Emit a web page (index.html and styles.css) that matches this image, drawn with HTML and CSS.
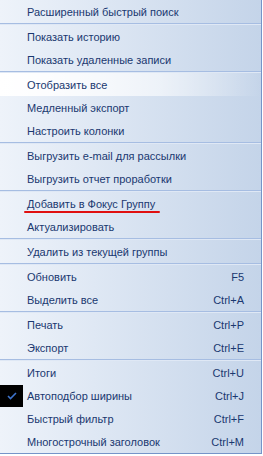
FILE: index.html
```html
<!DOCTYPE html>
<html lang="ru">
<head>
    <meta charset="UTF-8">
    <title>Контекстное меню</title>
    <link rel="stylesheet" href="styles.css">
</head>
<body>

    <!-- Context menu -->
    <div class="menu">
        <div class="item"><span class="icon"></span><span class="label">Расширенный быстрый поиск</span></div>
        <div class="sep"></div>
        <div class="item"><span class="icon"></span><span class="label">Показать историю</span></div>
        <div class="item"><span class="icon"></span><span class="label">Показать удаленные записи</span></div>
        <div class="sep"></div>
        <div class="item hover"><span class="icon"></span><span class="label">Отобразить все</span></div>
        <div class="item"><span class="icon"></span><span class="label">Медленный экспорт</span></div>
        <div class="item"><span class="icon"></span><span class="label">Настроить колонки</span></div>
        <div class="sep"></div>
        <div class="item"><span class="icon"></span><span class="label">Выгрузить e-mail для рассылки</span></div>
        <div class="item"><span class="icon"></span><span class="label">Выгрузить отчет проработки</span></div>
        <div class="sep"></div>
        <div class="item"><span class="icon"></span><span class="label marked">Добавить в Фокус Группу</span></div>
        <div class="item"><span class="icon"></span><span class="label">Актуализировать</span></div>
        <div class="sep"></div>
        <div class="item"><span class="icon"></span><span class="label">Удалить из текущей группы</span></div>
        <div class="sep"></div>
        <div class="item"><span class="icon"></span><span class="label">Обновить</span><span class="key">F5</span></div>
        <div class="item"><span class="icon"></span><span class="label">Выделить все</span><span class="key">Ctrl+A</span></div>
        <div class="sep"></div>
        <div class="item"><span class="icon"></span><span class="label">Печать</span><span class="key">Ctrl+P</span></div>
        <div class="item"><span class="icon"></span><span class="label">Экспорт</span><span class="key">Ctrl+E</span></div>
        <div class="sep"></div>
        <div class="item"><span class="icon"></span><span class="label">Итоги</span><span class="key">Ctrl+U</span></div>
        <div class="item"><span class="icon checked">
            <svg width="10" height="8" viewBox="0 0 10 8"><path d="M1 4 L3.5 6.5 L9 1" fill="none" stroke="#3d73cc" stroke-width="1.6"/></svg>
        </span><span class="label">Автоподбор ширины</span><span class="key">Ctrl+J</span></div>
        <div class="item"><span class="icon"></span><span class="label">Быстрый фильтр</span><span class="key">Ctrl+F</span></div>
        <div class="item"><span class="icon"></span><span class="label">Многострочный заголовок</span><span class="key">Ctrl+M</span></div>
    </div>

</body>
</html>
```

FILE: styles.css
```css
body {
    margin: 0;
    padding: 0;
    font-family: "Liberation Sans", Arial, sans-serif;
    font-size: 11px;
    background: #ffffff;
}
.menu {
    width: 261px;
    background: linear-gradient(to right, #eef3fa, #c4d4e9);
    border-right: 1px solid #7594c9;
    border-bottom: 1px solid #7594c9;
    color: #1a3870;
}
.item {
    display: flex;
    align-items: center;
    height: 23px;
    padding-top: 1px;
    box-sizing: border-box;
}
.item.hover {
    background: linear-gradient(to right, #ffffff, rgba(255, 255, 255, 0.6) 60%, rgba(255, 255, 255, 0));
}
.icon {
    width: 23px;
    height: 22px;
    margin-right: 4px;
    display: flex;
    align-items: center;
    justify-content: center;
}
.icon.checked {
    background: #000000;
}
.label {
    flex: 1;
    white-space: nowrap;
}
.key {
    padding-right: 17px;
}
.sep {
    height: 1px;
    background: #a6bde2;
    border-bottom: 1px solid #dfe8f5;
}
.marked {
    position: relative;
}
.marked::after {
    content: "";
    position: absolute;
    left: -3px;
    bottom: -3px;
    width: 136px;
    height: 2px;
    border-radius: 2px;
    background: #e01010;
}
```
